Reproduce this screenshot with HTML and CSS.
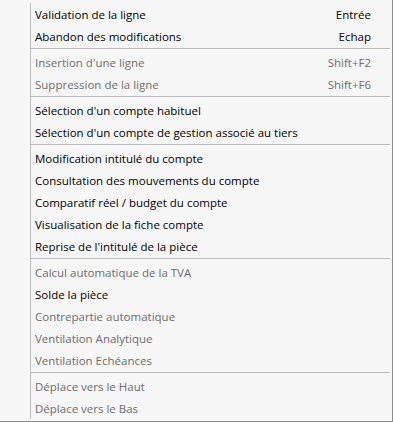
FILE: index.html
```html
<!DOCTYPE html>
<html lang="fr">
<head>
    <meta charset="UTF-8">
    <meta name="viewport" content="width=device-width, initial-scale=1.0">
    <title>Menu contextuel</title>
    <link rel="stylesheet" href="styles.css">
</head>
<body>
    <div class="menu">
        <ul class="menu-list">
            <li class="item"><span class="label">Validation de la ligne</span><span class="key">Entrée</span></li>
            <li class="item"><span class="label">Abandon des modifications</span><span class="key">Echap</span></li>
            <li class="sep"></li>
            <li class="item disabled"><span class="label">Insertion d'une ligne</span><span class="key">Shift+F2</span></li>
            <li class="item disabled"><span class="label">Suppression de la ligne</span><span class="key">Shift+F6</span></li>
            <li class="sep"></li>
            <li class="item"><span class="label">Sélection d'un compte habituel</span></li>
            <li class="item"><span class="label">Sélection d'un compte de gestion associé au tiers</span></li>
            <li class="sep"></li>
            <li class="item"><span class="label">Modification intitulé du compte</span></li>
            <li class="item"><span class="label">Consultation des mouvements du compte</span></li>
            <li class="item"><span class="label">Comparatif réel / budget du compte</span></li>
            <li class="item"><span class="label">Visualisation de la fiche compte</span></li>
            <li class="item"><span class="label">Reprise de l'intitulé de la pièce</span></li>
            <li class="sep"></li>
            <li class="item disabled"><span class="label">Calcul automatique de la TVA</span></li>
            <li class="item"><span class="label">Solde la pièce</span></li>
            <li class="item disabled"><span class="label">Contrepartie automatique</span></li>
            <li class="item disabled"><span class="label">Ventilation Analytique</span></li>
            <li class="item disabled"><span class="label">Ventilation Echéances</span></li>
            <li class="sep"></li>
            <li class="item disabled"><span class="label">Déplace vers le Haut</span></li>
            <li class="item disabled"><span class="label">Déplace vers le Bas</span></li>
        </ul>
    </div>
</body>
</html>
```

FILE: styles.css
```css
html, body {
    margin: 0;
    padding: 0;
    overflow: hidden;
}
body {
    font-family: "Open Sans", "Noto Sans", Arial, sans-serif;
    font-size: 11.5px;
    color: #000000;
    background-color: #f7f7f7;
}
.menu {
    width: 362px;
    height: 416px;
    padding: 3px 0 2px 30px;
    background-color: #f7f7f7;
    border-right: 1px solid #8c8c8c;
    border-bottom: 1px solid #8c8c8c;
}
.menu-list {
    list-style: none;
    margin: 0;
    padding: 0 2px 0 0;
    height: 416px;
    border-left: 1px solid #bcbcbc;
}
.item {
    display: flex;
    justify-content: space-between;
    align-items: center;
    height: 22px;
    padding: 0 19px 0 4px;
    white-space: nowrap;
}
.item.disabled {
    color: #6d6d6d;
}
.sep {
    height: 1px;
    margin: 1px 0 2px 0;
    background-color: #bcbcbc;
}
```
